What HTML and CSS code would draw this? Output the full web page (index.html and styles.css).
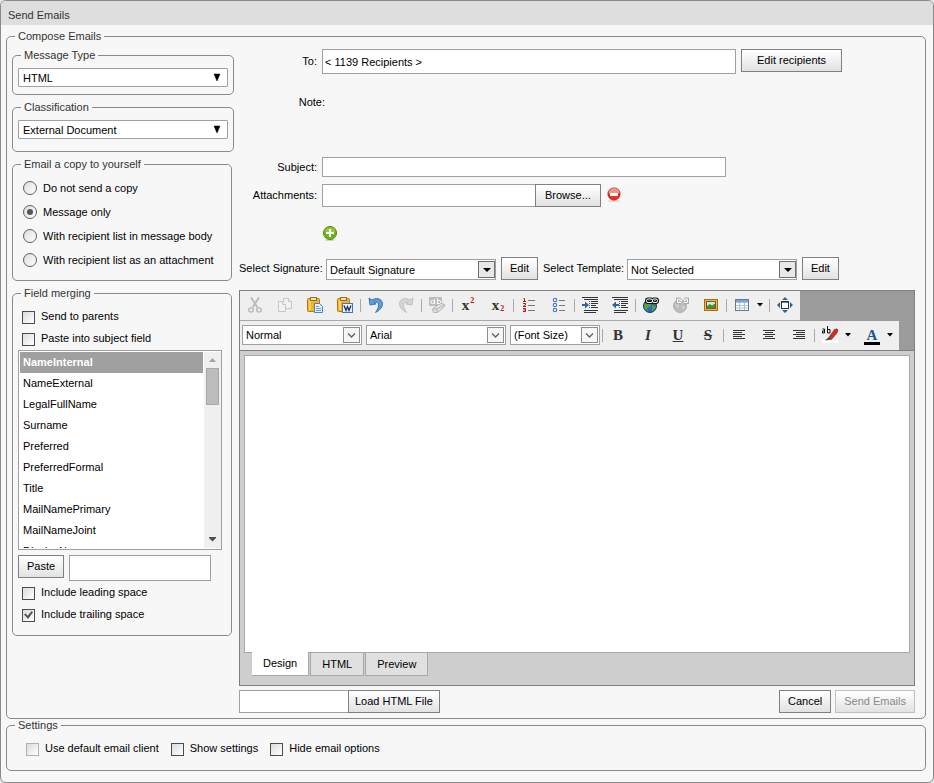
FILE: index.html
```html
<!DOCTYPE html>
<html lang="en">
<head>
    <meta charset="UTF-8">
    <meta name="viewport" content="width=device-width, initial-scale=1.0">
    <title>Send Emails</title>
    <link rel="stylesheet" href="styles.css">
</head>
<body>
    <form class="window">
        <h1 class="window-title">Send Emails</h1>
        <div class="window-body">
            <fieldset class="compose">
                <legend>Compose Emails</legend>
                <div class="columns">

                    <div class="sidebar">
                        <fieldset class="group">
                            <legend>Message Type</legend>
                            <div class="dropdown">
                                <select aria-label="Message Type"><option>HTML</option></select>
                                <svg class="arrow" width="16" height="16" viewBox="0 0 16 16"><path d="M3 4h6l-3 7z" fill="#000" stroke="#000" stroke-width=".5"/></svg>
                            </div>
                        </fieldset>

                        <fieldset class="group group-tall">
                            <legend>Classification</legend>
                            <div class="dropdown">
                                <select aria-label="Classification"><option>External Document</option></select>
                                <svg class="arrow" width="16" height="16" viewBox="0 0 16 16"><path d="M3 4h6l-3 7z" fill="#000" stroke="#000" stroke-width=".5"/></svg>
                            </div>
                        </fieldset>

                        <fieldset class="group copy-group">
                            <legend>Email a copy to yourself</legend>
                            <label class="radio-row"><input type="radio" name="copy">Do not send a copy</label>
                            <label class="radio-row"><input type="radio" name="copy" checked>Message only</label>
                            <label class="radio-row"><input type="radio" name="copy">With recipient list in message body</label>
                            <label class="radio-row"><input type="radio" name="copy">With recipient list as an attachment</label>
                        </fieldset>

                        <fieldset class="group merge-group">
                            <legend>Field merging</legend>
                            <label class="check-row"><input type="checkbox">Send to parents</label>
                            <label class="check-row"><input type="checkbox">Paste into subject field</label>
                            <div class="field-list">
                                <select size="9" aria-label="Merge fields">
                                    <option selected>NameInternal</option>
                                    <option>NameExternal</option>
                                    <option>LegalFullName</option>
                                    <option>Surname</option>
                                    <option>Preferred</option>
                                    <option>PreferredFormal</option>
                                    <option>Title</option>
                                    <option>MailNamePrimary</option>
                                    <option>MailNameJoint</option>
                                    <option>DisplayName</option>
                                </select>
                                <div class="scrollbar">
                                    <svg width="17" height="16" viewBox="0 0 17 16"><path d="M5 10h7l-3.500-4z" fill="#a3a3a3"/></svg>
                                    <span class="thumb"></span>
                                    <svg class="scroll-down" width="17" height="17" viewBox="0 0 17 17"><path d="M5 6h7v1l-3.500 3.500L5 7z" fill="#505050"/></svg>
                                </div>
                            </div>
                            <div class="paste-row">
                                <button type="button">Paste</button>
                                <input type="text" aria-label="Merge field text">
                            </div>
                            <label class="check-row">
                                <input type="checkbox">Include leading space
                            </label>
                            <label class="check-row">
                                <input type="checkbox" checked>Include trailing space
                            </label>
                        </fieldset>
                    </div>

                    <div class="main">
                        <div class="row to-row">
                            <label class="field-label" for="to">To:</label>
                            <input type="text" id="to" value="&lt; 1139 Recipients &gt;">
                            <button type="button">Edit recipients</button>
                        </div>
                        <div class="note">Note:</div>
                        <div class="row subject-row">
                            <label class="field-label" for="subject">Subject:</label>
                            <input type="text" id="subject">
                        </div>
                        <div class="row attach-row">
                            <label class="field-label" for="attachment">Attachments:</label>
                            <div class="joined">
                                <input type="text" id="attachment">
                                <button type="button">Browse...</button>
                            </div>
                            <button type="button" class="icon-btn" aria-label="Remove attachment">
                                <svg width="16" height="16" viewBox="0 0 16 16">
                                    <ellipse cx="8" cy="14" rx="6" ry="1" fill="#d8d8d8"/>
                                    <circle cx="8" cy="7" r="6.200" fill="#d62718" stroke="#b8281c" stroke-width=".6"/>
                                    <path d="M2.500 6.500a5.500 5.500 0 0 1 11 0z" fill="#ee9490"/>
                                    <path d="M3 9h10a5.300 5.300 0 0 1-10 0z" fill="#f5301a"/>
                                    <rect x="4" y="6" width="8" height="3" fill="#fff"/>
                                </svg>
                            </button>
                        </div>
                        <div class="add-row">
                            <button type="button" class="icon-btn" aria-label="Add attachment">
                                <svg width="16" height="16" viewBox="0 0 16 16">
                                    <ellipse cx="8" cy="15" rx="5" ry="1" fill="#d0d0d0"/>
                                    <circle cx="8" cy="8" r="6.500" fill="#6db51c" stroke="#478c10"/>
                                    <path d="M2.800 7.500a5.200 5.200 0 0 1 10.400 0z" fill="#8fcb3c"/>
                                    <path d="M7 4h2v3h3v2H9v3H7V9H4V7h3z" fill="#fff"/>
                                </svg>
                            </button>
                        </div>

                        <div class="row options-row">
                            <label class="signature-label" for="signature">Select Signature:</label>
                            <div class="dropdown boxed">
                                <select id="signature"><option>Default Signature</option></select>
                                <svg class="arrow" width="17" height="17" viewBox="0 0 17 17"><rect x=".5" y=".5" width="16" height="16" fill="#e8e8e8" stroke="#707070"/><path d="M5 7h8l-4 4z" fill="#000"/></svg>
                            </div>
                            <button type="button">Edit</button>
                            <label class="template-label" for="template">Select Template:</label>
                            <div class="dropdown boxed">
                                <select id="template"><option>Not Selected</option></select>
                                <svg class="arrow" width="17" height="17" viewBox="0 0 17 17"><rect x=".5" y=".5" width="16" height="16" fill="#e8e8e8" stroke="#707070"/><path d="M5 7h8l-4 4z" fill="#000"/></svg>
                            </div>
                            <button type="button">Edit</button>
                        </div>

                        <div class="editor">
                            <div class="toolbars">
                                <div class="toolbar">
                                    <button type="button" class="tool" aria-label="Cut">
                                        <svg width="16" height="16" viewBox="0 0 16 16" fill="none" stroke="#bcbcbc" stroke-width="1.500"><path d="M4 .5l6.500 10M12 .5l-6.500 10" stroke-width="2"/><ellipse cx="4" cy="13" rx="2.300" ry="2"/><ellipse cx="12" cy="13" rx="2.300" ry="2"/></svg>
                                    </button>
                                    <button type="button" class="tool" aria-label="Copy">
                                        <svg width="16" height="16" viewBox="0 0 16 16" fill="#f2f2f2" stroke="#c6c6c6"><path d="M6.500 1.500h5l3 3v7h-8z"/><path d="M11.500 1.500v3h3" /><path d="M1.500 4.500h4l3 3v7h-7z"/><path d="M5.500 4.500v3h3"/></svg>
                                    </button>
                                    <button type="button" class="tool" aria-label="Paste">
                                        <svg width="18" height="18" viewBox="0 0 18 18"><rect x="1.500" y="2.500" width="12" height="13" rx="1" fill="#f3b229" stroke="#b97a14"/><path d="M3 4h2v10H3z" fill="#ffd45e"/><rect x="4.500" y="1.500" width="6" height="3" fill="#f2dfaa" stroke="#8c703c"/><path d="M8.500 7.500h5l3 3v6h-8z" fill="#e4f0fc" stroke="#4584bd"/><path d="M10 10.500h3M10 12.500h5M10 14.500h5" stroke="#67a0d2"/></svg>
                                    </button>
                                    <button type="button" class="tool" aria-label="Paste from Word">
                                        <svg width="18" height="18" viewBox="0 0 18 18"><rect x="1.500" y="2.500" width="12" height="13" rx="1" fill="#f3b229" stroke="#b97a14"/><path d="M3 4h2v10H3z" fill="#ffd45e"/><rect x="4.500" y="1.500" width="6" height="3" fill="#f2dfaa" stroke="#8c703c"/><rect x="6.500" y="7.500" width="10" height="9" fill="#edf4fd" stroke="#4775b0"/><path d="M8 9.500l2 5 1.500-4 1.500 4 2-5" fill="none" stroke="#172f68" stroke-width="1.300"/></svg>
                                    </button>
                                    <span class="sep"></span>
                                    <button type="button" class="tool" aria-label="Undo">
                                        <svg width="16" height="18" viewBox="0 0 16 18"><path d="M1 2l1 7 6-1-2-1.500c3-1 5 .5 4.500 3.500-.2 2-1.500 4-3 6.500 4-2 6.500-4.500 7-8C15 4 10 .5 4 4z" fill="#5d9ddb" stroke="#2b65a8" stroke-width=".8"/></svg>
                                    </button>
                                    <button type="button" class="tool" aria-label="Redo">
                                        <svg width="16" height="18" viewBox="0 0 16 18"><path d="M15 2l-1 7-6-1 2-1.500c-3-1-5 .5-4.500 3.500.2 2 1.500 4 3 6.500-4-2-6.500-4.500-7-8C1 4 6 .5 12 4z" fill="#d5d5d5" stroke="#b9b9b9" stroke-width=".8"/></svg>
                                    </button>
                                    <span class="sep"></span>
                                    <button type="button" class="tool" aria-label="Strip formatting">
                                        <svg width="18" height="18" viewBox="0 0 18 18" fill="none" stroke="#b5b5b5"><rect x="1" y="1" width="13" height="9" rx="1" fill="#bcbcbc" stroke="none"/><circle cx="4.500" cy="6" r="1.700" stroke="#fff"/><path d="M6.500 3v5M9.500 2v6" stroke="#fff"/><circle cx="11" cy="6" r="1.700" stroke="#fff"/><path d="M4.500 13l6-4.500q3-2 6 0v2l-7 6h-4z" fill="#e2e2e2"/><path d="M4.500 13h4.500l7.500-4.500M9 13v3.500"/></svg>
                                    </button>
                                    <span class="sep"></span>
                                    <button type="button" class="tool glyph" aria-label="Superscript">x<sup>2</sup></button>
                                    <button type="button" class="tool glyph" aria-label="Subscript">x<sub>2</sub></button>
                                    <span class="sep"></span>
                                    <button type="button" class="tool" aria-label="Numbered list">
                                        <svg width="14" height="16" viewBox="0 0 14 16" fill="none"><path d="M1.500 1.500h1v3M1 4.500h3M1 6.500h2.500v1.500l-2.500 1.500h3M1 11.500h2.500v3H1M1.500 13h2" stroke="#b31717"/><path d="M6 3.500h7M6 8.500h7M6 13.500h7" stroke="#777"/></svg>
                                    </button>
                                    <button type="button" class="tool" aria-label="Bullet list">
                                        <svg width="14" height="16" viewBox="0 0 14 16" fill="#fff"><g stroke="#4d7db8" stroke-width="1.200"><circle cx="3" cy="3" r="1.700"/><circle cx="3" cy="8" r="1.700"/><circle cx="3" cy="13" r="1.700"/></g><path d="M7 3.500h6M7 8.500h6M7 13.500h6" stroke="#777"/></svg>
                                    </button>
                                    <span class="sep"></span>
                                    <button type="button" class="tool" aria-label="Indent">
                                        <svg width="16" height="16" viewBox="0 0 16 16"><path d="M0 .5h16M2 2.500h14M9 4.500h7M9 6.500h7M9 8.500h5M9 10.500h7M2 13.500h14M2 15.500h12" stroke="#333"/><path d="M7.500 4v8" stroke="#555" stroke-dasharray="1 1"/><path d="M0 7h3V4.500l4 3.500-4 3.500V9H0z" fill="#2e64a4"/></svg>
                                    </button>
                                    <button type="button" class="tool" aria-label="Outdent">
                                        <svg width="16" height="16" viewBox="0 0 16 16"><path d="M0 .5h16M2 2.500h14M9 4.500h7M9 6.500h7M9 8.500h5M9 10.500h7M2 13.500h14M2 15.500h12" stroke="#333"/><path d="M7.500 4v8" stroke="#555" stroke-dasharray="1 1"/><path d="M7 7H4V4.500L0 8l4 3.500V9h3z" fill="#2e64a4"/></svg>
                                    </button>
                                    <span class="sep"></span>
                                    <button type="button" class="tool" aria-label="Insert link">
                                        <svg width="18" height="18" viewBox="0 0 18 18"><circle cx="8" cy="10" r="6.500" fill="#2c6cae" stroke="#16406f"/><path d="M2 9l3-3 4 2-1 3-3 1 1 3-3-2zM10 9l4 1-2 4-2 1z" fill="#59a33c"/><g fill="none" stroke="#111" stroke-width="3"><rect x="4.500" y="3" width="6" height="3.500" rx="1.500"/><rect x="10.500" y="3" width="5" height="3.500" rx="1.500"/></g><g fill="none" stroke="#fff"><rect x="4.500" y="3" width="6" height="3.500" rx="1.500"/><rect x="10.500" y="3" width="5" height="3.500" rx="1.500"/></g></svg>
                                    </button>
                                    <button type="button" class="tool" aria-label="Remove link">
                                        <svg width="18" height="18" viewBox="0 0 18 18"><circle cx="8" cy="10" r="6.500" fill="#bcbcbc" stroke="#adadad"/><path d="M3 8l4 1-1 3 2 3M10 9l3 2-2 3z" fill="#d5d5d5"/><g fill="none" stroke="#aaa" stroke-width="3"><path d="M9 3H5.500v3.500H9M12 3h3.500v3.500H12"/></g><g fill="none" stroke="#fff"><path d="M9 3H5.500v3.500H9M12 3h3.500v3.500H12M7 4.700h3M12 4.700h2"/></g></svg>
                                    </button>
                                    <button type="button" class="tool" aria-label="Insert image">
                                        <svg width="16" height="16" viewBox="0 0 16 16"><rect x="1.500" y="2.500" width="13" height="11" fill="#f2b83e" stroke="#a56b19"/><rect x="3.500" y="4.500" width="9" height="7" fill="#c9e8f6" stroke="#7b5a20"/><path d="M4 11V9l3-2 2 1.500 3-2V11z" fill="#3f9132"/></svg>
                                    </button>
                                    <span class="sep"></span>
                                    <button type="button" class="tool" aria-label="Insert table">
                                        <svg width="16" height="16" viewBox="0 0 16 16"><rect x="1.500" y="2.500" width="13" height="11" fill="#fff" stroke="#667b92"/><path d="M2 3h12v2H2z" fill="#76a5d4"/><path d="M2 5.500h12M2 8.500h12M2 11h12M5.500 5v8M10.500 5v8" stroke="#a9c2db"/></svg>
                                    </button>
                                    <button type="button" class="tool-caret" aria-label="Table options"><svg width="6" height="4" viewBox="0 0 6 4"><path d="M0 0h6L3 3.500z"/></svg></button>
                                    <span class="sep"></span>
                                    <button type="button" class="tool" aria-label="Full screen">
                                        <svg width="16" height="16" viewBox="0 0 16 16"><path d="M8 0l3 3H5zM8 16l3-3H5zM0 8l3-3v6zM16 8l-3-3v6z" fill="#2862a2"/><rect x="4.500" y="4.500" width="7" height="7" fill="#fff" stroke="#333"/><path d="M5 5.500h6" stroke="#777"/></svg>
                                    </button>
                                </div>
                                <div class="toolbar toolbar-format">
                                    <div class="dropdown combo combo-style">
                                        <select aria-label="Paragraph style"><option>Normal</option></select>
                                        <svg class="arrow" width="17" height="16" viewBox="0 0 17 16"><rect x=".5" y=".5" width="16" height="15" fill="#f6f6f6" stroke="#8c8c8c"/><path d="M5 6.500l3.500 3.500L12 6.500" fill="none" stroke="#666" stroke-width="1.400"/></svg>
                                    </div>
                                    <div class="dropdown combo combo-font">
                                        <select aria-label="Font name"><option>Arial</option></select>
                                        <svg class="arrow" width="17" height="16" viewBox="0 0 17 16"><rect x=".5" y=".5" width="16" height="15" fill="#f6f6f6" stroke="#8c8c8c"/><path d="M5 6.500l3.500 3.500L12 6.500" fill="none" stroke="#666" stroke-width="1.400"/></svg>
                                    </div>
                                    <div class="dropdown combo combo-size">
                                        <select aria-label="Font size"><option>(Font Size)</option></select>
                                        <svg class="arrow" width="17" height="16" viewBox="0 0 17 16"><rect x=".5" y=".5" width="16" height="15" fill="#f6f6f6" stroke="#8c8c8c"/><path d="M5 6.500l3.500 3.500L12 6.500" fill="none" stroke="#666" stroke-width="1.400"/></svg>
                                    </div>
                                    <span class="sep"></span>
                                    <button type="button" class="tool glyph">B</button>
                                    <button type="button" class="tool glyph"><i>I</i></button>
                                    <button type="button" class="tool glyph"><u>U</u></button>
                                    <button type="button" class="tool glyph"><s>S</s></button>
                                    <span class="sep"></span>
                                    <button type="button" class="tool" aria-label="Align left">
                                        <svg width="12" height="10" viewBox="0 0 12 10"><path d="M0 .5h12M0 2.500h9M0 4.500h12M0 6.500h9M0 8.500h12" stroke="#333"/></svg>
                                    </button>
                                    <button type="button" class="tool" aria-label="Align center">
                                        <svg width="12" height="10" viewBox="0 0 12 10"><path d="M0 .5h12M2 2.500h8M0 4.500h12M2 6.500h8M0 8.500h12" stroke="#333"/></svg>
                                    </button>
                                    <button type="button" class="tool" aria-label="Align right">
                                        <svg width="12" height="10" viewBox="0 0 12 10"><path d="M0 .5h12M3 2.500h9M0 4.500h12M3 6.500h9M0 8.500h12" stroke="#333"/></svg>
                                    </button>
                                    <span class="sep"></span>
                                    <button type="button" class="tool" aria-label="Highlight color">
                                        <svg width="18" height="18" viewBox="0 0 18 18"><rect x="1" y="14" width="16" height="3" fill="#fff"/><g fill="none" stroke="#111"><path d="M1.500 3h2v4h-2V5h2M6.500 0v7M6.500 3.500h2.500v3.500H6.500"/></g><path d="M8 11l5.500-7.500Q16 2 17 4l-1 3-5.500 6.500z" fill="#da2b23" stroke="#85201a" stroke-width=".6"/><path d="M8 11l2.500 2.500L4 14.500z" fill="#444"/></svg>
                                    </button>
                                    <button type="button" class="tool-caret" aria-label="Highlight options"><svg width="6" height="4" viewBox="0 0 6 4"><path d="M0 0h6L3 3.500z"/></svg></button>
                                    <button type="button" class="tool glyph font-color" aria-label="Font color"><span>A</span></button>
                                    <button type="button" class="tool-caret" aria-label="Font color options"><svg width="6" height="4" viewBox="0 0 6 4"><path d="M0 0h6L3 3.500z"/></svg></button>
                                </div>
                            </div>
                            <div class="editor-body">
                                <textarea aria-label="Message"></textarea>
                                <div class="tabs">
                                    <button type="button" class="tab active">Design</button>
                                    <button type="button" class="tab">HTML</button>
                                    <button type="button" class="tab">Preview</button>
                                </div>
                            </div>
                        </div>

                        <div class="row footer-row">
                            <div class="joined load-file">
                                <input type="text" aria-label="HTML file">
                                <button type="button">Load HTML File</button>
                            </div>
                            <button type="button">Cancel</button>
                            <button type="submit" disabled>Send Emails</button>
                        </div>
                    </div>
                </div>
            </fieldset>

            <fieldset class="settings">
                <legend>Settings</legend>
                <div class="settings-row">
                    <label class="check-row"><input type="checkbox" disabled>Use default email client</label>
                    <label class="check-row"><input type="checkbox">Show settings</label>
                    <label class="check-row"><input type="checkbox">Hide email options</label>
                </div>
            </fieldset>
        </div>
    </form>
</body>
</html>
```

FILE: styles.css
```css
* {
    box-sizing: border-box;
}
body {
    margin: 0;
    background: #e4e4e4;
    color: #000;
}
body,
button,
input,
select,
textarea {
    font-family: "Liberation Sans", Arial, sans-serif;
    font-size: 11px;
    line-height: 13px;
}
svg {
    display: block;
}

/* window frame */
.window {
    border: 1px solid #8a8a8a;
    border-radius: 6px;
    background: #f7f7f7;
    overflow: hidden;
}
.window-title {
    margin: 0;
    padding: 8px 7px 3px;
    background: #dedede;
    color: #333;
    font-size: 11px;
    font-weight: normal;
    line-height: 13px;
}
.window-body {
    padding: 5px 7px 11px 5px;
}

/* groups */
fieldset {
    min-width: 0;
    margin: 0;
    border: 1px solid #8a8a8a;
    border-radius: 5px;
}
legend {
    margin-left: 3px;
    padding: 0 3px;
    color: #333;
}
.compose {
    padding: 6px 10px 5px 5px;
}
.columns {
    display: flex;
    gap: 5px;
}
.sidebar {
    display: flex;
    flex: 0 0 222px;
    flex-direction: column;
    gap: 6px;
}
.group {
    padding: 6px 5px 7px;
}
.group-tall {
    padding-bottom: 12px;
}
.copy-group {
    margin-right: 2px;
    padding: 5px 5px 8px;
}
.merge-group {
    margin-right: 2px;
    padding: 5px 9px 10px 5px;
}
.radio-row,
.check-row {
    display: flex;
    align-items: center;
    gap: 6px;
    height: 22px;
    padding-left: 4px;
}
.radio-row {
    height: 24px;
    padding-left: 5px;
}

/* form controls */
input[type="radio"],
input[type="checkbox"] {
    appearance: none;
    display: grid;
    place-items: center;
    width: 13px;
    height: 13px;
    margin: 2px 0 0;
    border: 1px solid #4c4c4c;
    background: linear-gradient(135deg, #dcdcdc, #fff);
}
input[type="radio"] {
    width: 14px;
    height: 14px;
    margin: 0;
    border-color: #606060;
    border-radius: 50%;
}
input[type="radio"]:checked::before {
    content: "";
    width: 6px;
    height: 6px;
    border-radius: 50%;
    background: #555;
}
input[type="checkbox"]:checked::before {
    content: "";
    width: 9px;
    height: 8px;
    background: #555;
    clip-path: polygon(0 45%, 20% 30%, 40% 60%, 85% 0, 100% 15%, 45% 100%);
}
input[type="checkbox"]:disabled {
    border-color: #b0b0b0;
}
input[type="text"] {
    min-width: 0;
    height: 23px;
    padding: 0 2px;
    border: 1px solid #a0a0a0;
    background: #fff;
}
button {
    height: 23px;
    padding: 0 8px;
    border: 1px solid #808080;
    background: linear-gradient(#fff, #e2e2e2);
    color: #000;
    white-space: nowrap;
}
button:disabled {
    border-color: #c0c0c0;
    color: #888;
}
.dropdown {
    display: grid;
    align-items: center;
}
.dropdown select {
    grid-area: 1 / 1;
    appearance: none;
    width: 100%;
    height: 19px;
    padding: 1px 4px 0;
    border: 1px solid #a0a0a0;
    border-radius: 0;
    background: #fff;
    color: #000;
}
.group .dropdown select {
    border-radius: 1px;
}
.arrow {
    grid-area: 1 / 1;
    justify-self: end;
    margin-right: 1px;
    pointer-events: none;
}

/* merge field list */
.field-list {
    display: grid;
    grid-template-columns: 1fr 17px;
    height: 200px;
    margin-top: 1px;
    border: 1px solid #a0a0a0;
    padding: 1px 0 1px 1px;
    background: #fff;
}
.field-list select {
    height: 196px;
    padding: 0;
    border: 0;
    border-radius: 0;
    margin-right: 1px;
    background: #fff;
    overflow: hidden scroll;
    scrollbar-width: none;
}
.field-list option {
    min-height: 21px;
    padding: 4px 3px;
    color: #000;
    line-height: 13px;
}
.field-list option:checked {
    background: linear-gradient(#a0a0a0, #a0a0a0);
    color: #fff;
    font-weight: bold;
}
.scrollbar {
    display: flex;
    flex-direction: column;
    align-items: center;
    background: #f0f0f0;
}
.thumb {
    width: 13px;
    height: 37px;
    border: 1px solid #a8a8a8;
    background: #bcbcbc;
}
.scroll-down {
    margin-top: auto;
}
.paste-row {
    display: flex;
    align-items: flex-start;
    gap: 5px;
    margin-top: 5px;
}
.paste-row input {
    width: 142px;
    height: 26px;
}

/* message header */
.main {
    flex: 1;
    min-width: 0;
}
.row {
    display: flex;
    gap: 5px;
}
.field-label {
    align-self: center;
    width: 78px;
    text-align: right;
}
.to-row input {
    flex: 0 1 414px;
    height: 25px;
}
.to-row button {
    padding: 0 15px;
}
.note {
    width: 86px;
    margin-top: 22px;
    text-align: right;
}
.subject-row {
    margin-top: 48px;
}
.subject-row input {
    flex: 0 1 404px;
    height: 20px;
}
.attach-row {
    margin-top: 7px;
}
.joined {
    display: flex;
    min-width: 0;
}
.joined input {
    width: 213px;
    border-right: 0;
}
.icon-btn {
    height: 16px;
    padding: 0;
    border: 0;
    background: none;
}
.attach-row .joined button {
    padding: 0 9px;
}
.attach-row .icon-btn {
    margin-top: 3px;
}
.add-row {
    height: 16px;
    margin-top: 18px;
    padding-left: 83px;
}
.options-row {
    align-items: center;
    margin-top: 16px;
}
.options-row label {
    white-space: nowrap;
}
.signature-label {
    width: 82px;
}
.template-label {
    width: 79px;
}
.boxed {
    flex: 0 1 170px;
    margin-top: 2px;
}
.dropdown.boxed select {
    height: 21px;
    padding: 1px 3px 0;
}

/* editor */
.editor {
    margin-top: 10px;
    border: 1px solid #808080;
    background: #cecece;
}
.toolbars {
    display: flex;
    flex-direction: column;
    align-items: flex-start;
    border-bottom: 1px solid #808080;
    background: #9b9b9b;
}
.toolbar {
    display: flex;
    align-items: center;
    height: 30px;
    padding-bottom: 1px;
    border-bottom: 1px solid #a8a8a8;
    background: #efefef;
}
.toolbar-format {
    height: 29px;
    padding-left: 2px;
    border-bottom: 0;
}
.tool,
.tool-caret {
    display: flex;
    align-items: center;
    justify-content: center;
    width: 30px;
    height: 28px;
    padding: 0;
    border: 0;
    background: none;
}
.tool-caret {
    width: 12px;
    padding-right: 6px;
}
.sep {
    width: 1px;
    height: 13px;
    background: #aaa;
}
.glyph {
    color: #333;
    font-family: "Liberation Serif", "Times New Roman", serif;
    font-size: 15px;
    font-weight: bold;
    line-height: 16px;
}
.glyph sup,
.glyph sub {
    align-self: flex-start;
    margin: 5px 0 0 1px;
    color: #b31717;
    font-size: 8px;
    line-height: 10px;
}
.glyph sub {
    align-self: flex-end;
    margin: 0 0 5px 1px;
}
.font-color span {
    width: 16px;
    margin-top: 2px;
    border-bottom: 3px solid #000;
    color: #24538b;
    line-height: 14px;
}
.combo {
    margin-right: 4px;
}
.dropdown.combo select {
    height: 20px;
    padding: 0 3px;
}
.combo .arrow {
    margin-right: 2px;
}
.combo-style {
    width: 120px;
}
.combo-font {
    width: 140px;
}
.combo-size {
    width: 90px;
    margin-right: 2px;
}
.editor-body {
    padding: 4px 4px 9px;
}
.editor-body textarea {
    display: block;
    width: 100%;
    height: 298px;
    border: 1px solid #a8a8a8;
    background: #fff;
    resize: none;
}
.tabs {
    display: flex;
    gap: 1px;
    margin-top: -1px;
    padding-left: 8px;
}
.tab {
    height: 24px;
    padding: 0 11px;
    border-color: #a8a8a8;
    background: #e0e0e0;
}
.tab.active {
    border-width: 0 1px 1px 0;
    background: #fff;
}

/* bottom buttons */
.footer-row {
    gap: 4px;
    margin-top: 4px;
}
.load-file {
    margin-right: auto;
}
.load-file input {
    width: 109px;
}
.load-file button {
    padding: 0 6px;
}

/* settings */
.settings {
    padding: 5px 5px 11px;
}
.settings-row {
    display: flex;
    gap: 8px;
    padding-left: 10px;
}
```
